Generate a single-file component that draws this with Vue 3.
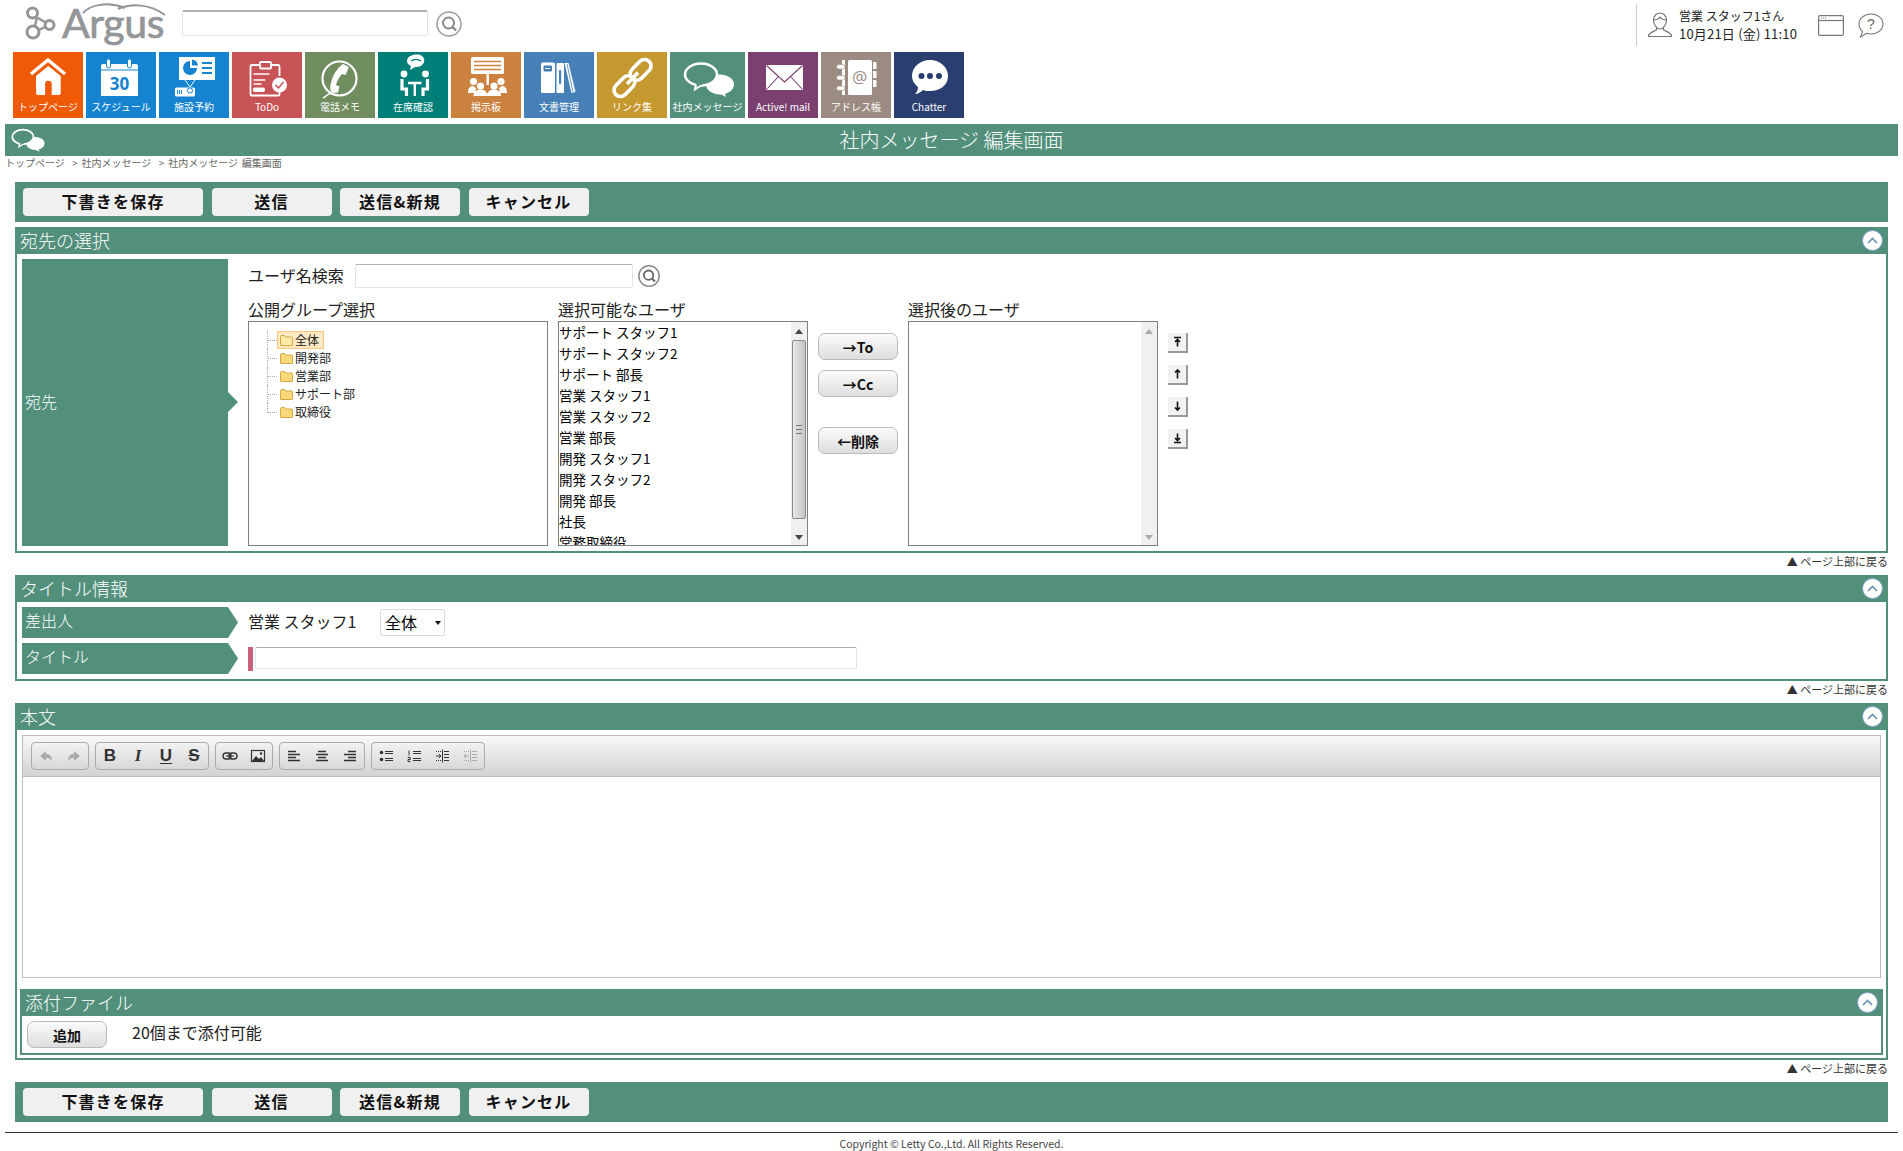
<script setup>
import { ref } from "vue";

const green = "#53907c";

// グローバルナビ
const tiles = [
  { label: "トップページ", color: "#ee5a06", icon: "home" },
  { label: "スケジュール", color: "#1583cf", icon: "calendar" },
  { label: "施設予約", color: "#1583cf", icon: "facility" },
  { label: "ToDo", color: "#c85356", icon: "todo" },
  { label: "電話メモ", color: "#708d60", icon: "phone" },
  { label: "在席確認", color: "#007f79", icon: "seat" },
  { label: "掲示板", color: "#cc823f", icon: "board" },
  { label: "文書管理", color: "#4680b6", icon: "docs" },
  { label: "リンク集", color: "#c69830", icon: "link" },
  { label: "社内メッセージ", color: green, icon: "message", wide: true },
  { label: "Active! mail", color: "#7b3f70", icon: "mail" },
  { label: "アドレス帳", color: "#9c8b82", icon: "address" },
  { label: "Chatter", color: "#2a3e70", icon: "chatter" },
];

const bubbles = (c) => `
  <ellipse cx="50" cy="32.500" rx="14" ry="10" fill="#fff"/>
  <path d="M47 40l9 5-2-6z" fill="#fff"/>
  <ellipse cx="31" cy="22.500" rx="16" ry="11" fill="${c}" stroke="#fff" stroke-width="2.600"/>
  <path d="M26 32.500l-1 5 7-4.500" fill="${c}" stroke="#fff" stroke-width="2"/>
  <path d="M26.500 31h6v2h-6z" fill="${c}"/>`;

const icons = {
  home: `<path d="M18 22 35 8l17 14" fill="none" stroke="#fff" stroke-width="3.400"/>
    <path d="M23 24 35.300 14 47.700 24v17a2 2 0 0 1-2 2h-7V32a3.300 3.300 0 0 0-6.600 0v11h-7a2 2 0 0 1-2-2z" fill="#fff"/>`,
  calendar: `<path d="M15 14a2 2 0 0 1 2-2h33a2 2 0 0 1 2 2v30H15z" fill="#fff"/>
    <rect x="15" y="17.500" width="37" height="1" fill="#1583cf"/>
    <rect x="20.500" y="7" width="4" height="9" rx="2" fill="#fff" stroke="#1583cf"/>
    <rect x="41.500" y="7" width="4" height="9" rx="2" fill="#fff" stroke="#1583cf"/>
    <text x="33.500" y="38" text-anchor="middle" font-family="'Open Sans',sans-serif" font-weight="700" font-size="17" fill="#1583cf">30</text>`,
  facility: `<rect x="20" y="5" width="36" height="23" fill="#fff"/>
    <path d="M31 9a7 7 0 1 0 7 7h-7z" fill="#1583cf"/><path d="M33 7.500a7 7 0 0 1 6 6h-6z" fill="#1583cf"/>
    <path d="M43 11h10M43 16h10M43 21h10" stroke="#1583cf" stroke-width="1.800"/>
    <path d="M26 28l5 7 5-7" fill="none" stroke="#fff"/>
    <rect x="16" y="35.500" width="20" height="9" rx="1.500" fill="#fff"/>
    <circle cx="31" cy="38.500" r="2.600" fill="#fff" stroke="#1583cf"/>
    <path d="M18.500 38v4M20.500 38v4M22.500 38v4" stroke="#1583cf"/>`,
  todo: `<path d="M27 13h-7a1.500 1.500 0 0 0-1.500 1.500v28a1 1 0 0 0 1 1h27a1 1 0 0 0 1-1v-5M47.500 24v-9.500a1.500 1.500 0 0 0-1.500-1.500h-7" fill="none" stroke="#fff" stroke-width="1.800"/>
    <rect x="28" y="10" width="11" height="6.500" rx="1" fill="#c85356" stroke="#fff" stroke-width="1.800"/>
    <path d="M21.500 22h16M21.500 28h12M21.500 32h8" stroke="#fff" stroke-width="1.600"/>
    <rect x="21" y="35.500" width="12" height="4.500" rx="2" fill="#fff"/>
    <circle cx="47.500" cy="33" r="7.500" fill="#fff"/>
    <path d="M43.500 33l3 3 5-6" fill="none" stroke="#c85356" stroke-width="1.500"/>`,
  phone: `<circle cx="34.500" cy="26.500" r="17" fill="none" stroke="#fff" stroke-width="2.200"/>
    <path d="M38 12l5 2.500a1 1 0 0 1 .500 1.500l-3 7-3.500-1c-3 3-5 7-6 11l3.500 1.500-1.500 6-4.500.500c-4-1-4-6-2-12 2-7 6-13 11.500-17z" fill="#fff"/>
    <path d="M26 41c-3 1-6 4-8 5" fill="none" stroke="#fff" stroke-width="1.500"/>`,
  seat: `<path d="M30 6c2-3 10-5 14-2 3 2 3 7 0 9-2 2-5 2-7 2l-5 3 1-4c-4-2-5-5-3-8z" fill="#fff"/>
    <path d="M33 9c3-2 7-2 10 0" fill="none" stroke="#007f79" stroke-width="1.200"/>
    <circle cx="26" cy="22" r="3.400" fill="#fff"/><circle cx="47.500" cy="22" r="3.400" fill="#fff"/>
    <path d="M24 27v10h4.500v7M49.500 27v10H45v7" fill="none" stroke="#fff" stroke-width="3.200"/>
    <path d="M30 31h13.500M36.800 31v13" fill="none" stroke="#fff" stroke-width="2.400"/>`,
  board: `<rect x="20" y="5" width="33" height="17" rx="1.500" fill="#fff"/>
    <path d="M23 9.500h27M23 13.500h27M23 17.500h27" stroke="#cc823f" stroke-width="1.400"/>
    <path d="M35.500 22h2.400v11h-2.400z" fill="#fff"/>
    <g fill="#fff"><circle cx="22.500" cy="29.500" r="3.600"/><circle cx="50" cy="29.500" r="3.600"/><circle cx="29.500" cy="34" r="3.600"/><circle cx="43" cy="34" r="3.600"/>
    <path d="M17 41c0-5 2-7 5-7l3 2-1 5zM56 41c0-5-2-7-5-7l-3 2 1 5zM22.500 44c0-4 3-6.500 7-6.500s7 2.500 7 6.500zM36 44c0-4 3-6.500 7-6.500s7 2.500 7 6.500z"/></g>`,
  docs: `<rect x="17" y="10.500" width="14" height="30.500" rx="1.500" fill="#fff"/>
    <rect x="19.500" y="13.500" width="8.500" height="6" rx="1" fill="#4680b6"/><path d="M21 16.500h5" stroke="#fff"/>
    <rect x="32.500" y="11" width="7.500" height="30" rx="1" fill="#fff"/><rect x="35" y="18" width="2.200" height="14" rx="1" fill="#4680b6"/>
    <path d="M40.500 11l4 0 7 29-4 1z" fill="#fff"/><path d="M43 12l6 28" stroke="#4680b6" stroke-width=".8"/>`,
  link: `<g fill="none" stroke="#fff" stroke-width="3.600" transform="rotate(-45 35.500 26)">
    <rect x="12" y="19.500" width="24" height="13" rx="6.500"/><rect x="35" y="19.500" width="24" height="13" rx="6.500"/></g>
    <path d="M30 32 41 20.500" stroke="#fff" stroke-width="3.600"/>`,
  message: bubbles(green),
  mail: `<rect x="18" y="13" width="37" height="25" fill="#fff"/>
    <path d="M18.500 13.500 36.500 30l18-16.500M18.500 37.500 30 25M54.500 37.500 43 25" fill="none" stroke="#7b3f70" stroke-width="1.100"/>`,
  address: `<rect x="21" y="8" width="3" height="35" fill="#fff"/><rect x="27" y="8" width="24" height="35" rx="1.500" fill="#fff"/>
    <g fill="#fff" stroke="#9c8b82" stroke-width=".6"><rect x="15.500" y="12.500" width="8.500" height="4.500" rx="2.200"/><rect x="15.500" y="23.500" width="8.500" height="4.500" rx="2.200"/><rect x="15.500" y="34" width="8.500" height="4.500" rx="2.200"/></g>
    <path d="M52 10h2.500a1 1 0 0 1 1 1v6H52zM52 19h2.500a1 1 0 0 1 1 1v6H52zM52 28h2.500a1 1 0 0 1 1 1v6H52z" fill="#fff"/>
    <text x="38.500" y="31" text-anchor="middle" font-family="'Open Sans',sans-serif" font-size="17" fill="#9c8b82">@</text>`,
  chatter: `<path d="M36 8c10 0 18 7 18 16s-8 15-18 15c-3 0-5 0-7-1-2 2-5 4-8 4 2-2 3-4 3-7-4-3-6-7-6-11 0-9 8-16 18-16z" fill="#fff"/>
    <circle cx="27.500" cy="24" r="3" fill="#2a3e70"/><circle cx="36" cy="24" r="3" fill="#2a3e70"/><circle cx="45" cy="24" r="3" fill="#2a3e70"/>`,
};

// ツリー
const groups = ["全体", "開発部", "営業部", "サポート部", "取締役"];

const users = [
  "サポート スタッフ1",
  "サポート スタッフ2",
  "サポート 部長",
  "営業 スタッフ1",
  "営業 スタッフ2",
  "営業 部長",
  "開発 スタッフ1",
  "開発 スタッフ2",
  "開発 部長",
  "社長",
  "常務取締役",
];

const actions = [
  { label: "下書きを保存", wide: true },
  { label: "送信" },
  { label: "送信&新規" },
  { label: "キャンセル" },
];

const sortIcons = [
  "M2 1.500h7M5.500 3.500v7M3 6l2.500-2.500L8 6",
  "M5.500 2v8.500M3 4.500 5.500 2 8 4.500",
  "M5.500 1.500V10M3 7.500 5.500 10 8 7.500",
  "M5.500 1.500v7M3 6l2.500 2.500L8 6M2 10.500h7",
];

// エディタのツールバー
const toolbar = [
  [{ icon: "undo", dim: true }, { icon: "redo", dim: true }],
  [{ text: "B", cls: "b" }, { text: "I", cls: "i" }, { text: "U", cls: "u" }, { text: "S", cls: "s" }],
  [{ icon: "chain" }, { icon: "image" }],
  [{ icon: "left" }, { icon: "center" }, { icon: "right" }],
  [{ icon: "ul" }, { icon: "ol" }, { icon: "indent" }, { icon: "outdent", dim: true }],
];

const tbIcons = {
  undo: `<path d="M8 3 2 8l6 5v-3c2 0 4 0 6 3 0-4-2-7-6-7z" fill="currentColor"/>`,
  redo: `<path d="M8 3l6 5-6 5v-3c-2 0-4 0-6 3 0-4 2-7 6-7z" fill="currentColor"/>`,
  chain: `<g fill="none" stroke="currentColor" stroke-width="1.400"><rect x="1" y="5" width="8" height="6" rx="3"/><rect x="7" y="5" width="8" height="6" rx="3"/></g><path d="M4 8h8" stroke="currentColor" stroke-width="1.200"/>`,
  image: `<rect x="1.500" y="2.500" width="13" height="11" fill="none" stroke="currentColor" stroke-width="1.200"/><path d="M2 13l4-5 3 3 2-2 3 4z" fill="currentColor"/><circle cx="11" cy="5.500" r="1.200" fill="currentColor"/>`,
  left: `<path d="M2 3.500h8M2 6.500h12M2 9.500h8M2 12.500h12" stroke="currentColor" stroke-width="1.500"/>`,
  center: `<path d="M4 3.500h8M2 6.500h12M4 9.500h8M2 12.500h12" stroke="currentColor" stroke-width="1.500"/>`,
  right: `<path d="M6 3.500h8M2 6.500h12M6 9.500h8M2 12.500h12" stroke="currentColor" stroke-width="1.500"/>`,
  ul: `<circle cx="3.500" cy="4.500" r="1.800" fill="currentColor"/><circle cx="3.500" cy="11.500" r="1.800" fill="currentColor"/><path d="M7 3.500h8M7 5.500h8M7 10.500h8M7 12.500h8" stroke="currentColor"/>`,
  ol: `<path d="M3 2.500v5M1.800 9.500h2.400v2H2v2h2.400M7 3.500h8M7 5.500h8M7 10.500h8M7 12.500h8" fill="none" stroke="currentColor"/>`,
  indent: `<path d="M8.500 1.500v13M10 3.500h5M10 6.500h5M10 9.500h5M10 12.500h5M2 8h5M5 6l2 2-2 2" fill="none" stroke="currentColor"/><path d="M2 3.500h5M2 12.500h5" stroke="currentColor" stroke-dasharray="1 1"/>`,
  outdent: `<path d="M8.500 1.500v13M10 3.500h5M10 6.500h5M10 9.500h5M10 12.500h5M2 8h5M4 6 2 8l2 2" fill="none" stroke="currentColor"/><path d="M2 3.500h5M2 12.500h5" stroke="currentColor" stroke-dasharray="1 1"/>`,
};

const titleText = ref("");
</script>

<template>
  <div class="page">
    <!-- ヘッダー -->
    <header class="top">
      <svg class="logo" width="150" height="60" viewBox="0 -8 150 60">
        <g fill="none" stroke="#939598" stroke-width="3">
          <circle cx="12.500" cy="13" r="5" />
          <circle cx="29.500" cy="25" r="4.500" />
          <circle cx="13" cy="32" r="6" />
          <path d="M16 17l9 5M15 26l2-9M19 30l6-3" stroke-width="2.400" />
          <path d="M63 13c7-8 24-12 42-5M98 9c14-6 32-5 47 6" stroke-width="2" />
        </g>
        <text x="42" y="38" font-family="Lato, sans-serif" font-size="41" letter-spacing="-.4" stroke="#939598" stroke-width=".7" fill="#939598">Argus</text>
      </svg>
      <input class="search" />
      <svg class="lens" width="26" height="26" viewBox="0 0 26 26">
        <circle cx="13" cy="13" r="12" fill="none" stroke="#9a9a9a" stroke-width="1.500" />
        <circle cx="12.500" cy="12" r="5.500" fill="none" stroke="#8a8a8a" stroke-width="2" />
        <path d="M16.500 16 20 19.500" stroke="#8a8a8a" stroke-width="2.400" />
      </svg>
      <div class="user">
        <svg width="24" height="26" viewBox="0 0 24 26" fill="none" stroke="#777" stroke-width="1.200">
          <path d="M5.500 8c0-4 3-7 6.500-7s6.500 3 6.500 7-3 9-6.500 9-6.500-5-6.500-9zM5.500 8c3 0 5-1 6.500-3 1.500 2 3.500 3 6.500 3" />
          <path d="M8.500 15.500v2.500c-3 1.500-8 2.500-8 6.500h23c0-4-5-5-8-6.500v-2.500" />
        </svg>
        <div class="who">
          <div>営業 スタッフ1さん</div>
          <div class="when">10月21日 (金) 11:10</div>
        </div>
        <svg class="win" width="26" height="21" viewBox="0 0 26 21" fill="none" stroke="#777" stroke-width="1.200">
          <rect x=".6" y=".6" width="24.800" height="19.800" rx="1.500" />
          <path d="M1 5.500h24" />
          <path d="M3 3h1M5 3h1M7 3h1" />
        </svg>
        <svg class="help" width="26" height="25" viewBox="0 0 26 25">
          <path d="M13 1c6.600 0 12 4.500 12 10s-5.400 10-12 10c-1.500 0-3-.2-4.300-.7L2.500 24l2-5.500C2.300 16.600 1 14 1 11 1 5.500 6.400 1 13 1z" fill="none" stroke="#777" stroke-width="1.100" />
          <text x="13" y="16" text-anchor="middle" font-family="'Liberation Sans',sans-serif" font-size="14" fill="#666">?</text>
        </svg>
      </div>
    </header>

    <!-- メニュー -->
    <nav class="tiles">
      <div v-for="t in tiles" :key="t.label" class="tile" :class="{ wide: t.wide }" :style="{ background: t.color }">
        <svg class="tile-icon" :width="t.wide ? 75 : 70" height="47" :viewBox="t.wide ? '0 0 75 47' : '0 0 70 47'" v-html="icons[t.icon]"></svg>
        <span>{{ t.label }}</span>
      </div>
    </nav>

    <div class="page-title">
      <svg width="35" height="25" viewBox="13 9 53 38" v-html="icons.message"></svg>
      <h1>社内メッセージ 編集画面</h1>
    </div>
    <div class="crumb">トップページ&nbsp;&nbsp;&gt;&nbsp;社内メッセージ&nbsp;&nbsp;&gt;&nbsp;社内メッセージ 編集画面</div>

    <div class="actions">
      <button v-for="a in actions" :key="a.label" :class="{ wide: a.wide }">{{ a.label }}</button>
    </div>

    <!-- 宛先の選択 -->
    <section class="sec">
      <div class="sec-head">
        <span>宛先の選択</span>
        <span class="fold"><svg width="11" height="7" viewBox="0 0 11 7"><path d="M1 6l4.500-4.500L10 6" fill="none" stroke="#6b8fb5" stroke-width="1.600" /></svg></span>
      </div>
      <div class="sec-body dest">
        <div class="th tall">宛先</div>
        <div class="dest-main">
          <div class="user-search">
            <label>ユーザ名検索</label>
            <input class="search-user" />
            <svg width="22" height="22" viewBox="0 0 26 26">
              <circle cx="13" cy="13" r="12" fill="none" stroke="#8a8a8a" stroke-width="1.800" />
              <circle cx="12.500" cy="12" r="5.500" fill="none" stroke="#666" stroke-width="2.200" />
              <path d="M16.500 16 20 19.500" stroke="#666" stroke-width="2.600" />
            </svg>
          </div>
          <div class="pickers">
            <div class="col">
              <div class="col-label">公開グループ選択</div>
              <div class="box tree">
                <div v-for="(g, i) in groups" :key="g" class="tree-row">
                  <span class="hook" :class="{ last: i === groups.length - 1 }"><i></i></span>
                  <span class="node" :class="{ on: i === 0 }">
                    <svg width="13" height="12" viewBox="0 0 13 12">
                      <path d="M.5 2.500a1 1 0 0 1 1-1h3l1 1.500h6a1 1 0 0 1 1 1v7a.5.5 0 0 1-.5.500H1a.5.5 0 0 1-.5-.5z" :fill="i === 0 ? '#fbeaa8' : '#f8d878'" stroke="#d2a945" />
                    </svg>
                    {{ g }}
                  </span>
                </div>
              </div>
            </div>
            <div class="col">
              <div class="col-label">選択可能なユーザ</div>
              <div class="box list">
                <div class="items">
                  <div v-for="u in users" :key="u" class="item">{{ u }}</div>
                </div>
                <div class="bar">
                  <span class="tri up"></span>
                  <span class="thumb"><i></i></span>
                  <span class="tri down"></span>
                </div>
              </div>
            </div>
            <div class="move">
              <button class="btn">→To</button>
              <button class="btn">→Cc</button>
              <button class="btn del">←削除</button>
            </div>
            <div class="col">
              <div class="col-label">選択後のユーザ</div>
              <div class="box list">
                <div class="items"></div>
                <div class="bar off">
                  <span class="tri up"></span>
                  <span class="gap"></span>
                  <span class="tri down"></span>
                </div>
              </div>
            </div>
            <div class="sort">
              <button v-for="d in sortIcons" :key="d" class="sort-btn">
                <svg width="11" height="12" viewBox="0 0 11 12"><path :d="d" fill="none" stroke="#111" stroke-width="1.600" /></svg>
              </button>
            </div>
          </div>
        </div>
      </div>
    </section>
    <div class="to-top">▲ ページ上部に戻る</div>

    <!-- タイトル情報 -->
    <section class="sec">
      <div class="sec-head">
        <span>タイトル情報</span>
        <span class="fold"><svg width="11" height="7" viewBox="0 0 11 7"><path d="M1 6l4.500-4.500L10 6" fill="none" stroke="#6b8fb5" stroke-width="1.600" /></svg></span>
      </div>
      <div class="sec-body info">
        <div class="info-row">
          <div class="th">差出人</div>
          <span class="sender">営業 スタッフ1</span>
          <div class="pick">全体<i></i></div>
        </div>
        <div class="info-row">
          <div class="th">タイトル</div>
          <span class="required"></span>
          <input v-model="titleText" class="title-input" />
        </div>
      </div>
    </section>
    <div class="to-top">▲ ページ上部に戻る</div>

    <!-- 本文 -->
    <section class="sec">
      <div class="sec-head">
        <span>本文</span>
        <span class="fold"><svg width="11" height="7" viewBox="0 0 11 7"><path d="M1 6l4.500-4.500L10 6" fill="none" stroke="#6b8fb5" stroke-width="1.600" /></svg></span>
      </div>
      <div class="sec-body main-body">
        <div class="editor">
          <div class="toolbar">
            <div v-for="(g, i) in toolbar" :key="i" class="tb-group">
              <span v-for="(b, j) in g" :key="j" class="tb-btn" :class="{ dim: b.dim }">
                <span v-if="b.text" class="glyph" :class="b.cls">{{ b.text }}</span>
                <svg v-else width="16" height="16" viewBox="0 0 16 16" v-html="tbIcons[b.icon]"></svg>
              </span>
            </div>
          </div>
          <div class="edit-area"></div>
        </div>
        <div class="attach">
          <div class="sec-head">
            <span>添付ファイル</span>
            <span class="fold"><svg width="11" height="7" viewBox="0 0 11 7"><path d="M1 6l4.500-4.500L10 6" fill="none" stroke="#6b8fb5" stroke-width="1.600" /></svg></span>
          </div>
          <div class="attach-body">
            <button class="btn">追加</button>
            <span>20個まで添付可能</span>
          </div>
        </div>
      </div>
    </section>
    <div class="to-top">▲ ページ上部に戻る</div>

    <div class="actions last">
      <button v-for="a in actions" :key="a.label" :class="{ wide: a.wide }">{{ a.label }}</button>
    </div>

    <footer class="foot">Copyright © Letty Co.,Ltd. All Rights Reserved.</footer>
  </div>
</template>

<style>
html,
body {
  margin: 0;
  background: #fff;
  overflow: hidden;
}
</style>

<style scoped>
.page {
  height: 1151px;
  padding: 0 5px;
  box-sizing: border-box;
  font-family: "Noto Sans CJK JP", "Noto Sans", sans-serif;
  color: #222;
}
.top {
  height: 52px;
  display: flex;
  align-items: flex-start;
}
.logo {
  margin: -8px 0 0 15px;
  flex: none;
}
.search {
  width: 246px;
  height: 26px;
  margin: 10px 0 0 12px;
  box-sizing: border-box;
  border: 1px solid #e2e2e8;
  border-top: 2px solid #b0b0b0;
  border-radius: 2px;
}
.lens {
  margin: 11px 0 0 8px;
}
.user {
  margin-left: auto;
  height: 42px;
  margin-top: 4px;
  border-left: 1px solid #ccc;
  display: flex;
  align-items: center;
  padding: 0 14px 0 11px;
  font-size: 12px;
  line-height: 18px;
}
.who {
  margin-left: 7px;
  width: 139px;
}
.when {
  font-size: 13px;
  letter-spacing: 0.2px;
}
.help {
  margin-left: 14px;
}
.tiles {
  display: flex;
  gap: 3px;
  margin-left: 8px;
}
.tile {
  width: 70px;
  height: 66px;
  display: flex;
  flex-direction: column;
  align-items: center;
  color: #fff;
  font-size: 10px;
  line-height: 14px;
}
.tile.wide {
  width: 75px;
}
.tile-icon {
  flex: none;
}
.tile span {
  margin-top: 1px;
  white-space: nowrap;
}
.page-title {
  margin-top: 6px;
  height: 32px;
  background: #53907c;
  display: grid;
  grid-template-columns: 1fr auto 1fr;
  align-items: center;
  padding-left: 6px;
}
.page-title h1 {
  margin: 0;
  font-size: 20px;
  font-weight: 300;
  color: #fff;
  line-height: 32px;
  transform: translateX(-3px);
}
.crumb {
  height: 26px;
  font-size: 10px;
  line-height: 14px;
  word-spacing: 1.500px;
  color: #666;
}
.actions {
  margin: 0 10px 5px;
  height: 40px;
  box-sizing: border-box;
  padding: 6px 8px;
  background: #53907c;
  display: flex;
  gap: 8.500px;
}
.actions.last {
  margin-bottom: 0;
}
.actions button {
  width: 120px;
  height: 28px;
  border: 0;
  border-radius: 4px;
  background: #f0f0f0;
  font-family: inherit;
  font-size: 16px;
  font-weight: 700;
  letter-spacing: 1.200px;
  line-height: 27px;
  padding: 0 0 1px;
  color: #111;
}
.actions button.wide {
  width: 180px;
}
.sec {
  margin: 0 10px;
}
.sec-head {
  height: 27px;
  background: #53907c;
  color: #fff;
  font-size: 18px;
  font-weight: 300;
  line-height: 27px;
  padding: 0 5.500px 0 5px;
  display: flex;
  justify-content: space-between;
  align-items: center;
}
.fold {
  width: 21px;
  height: 21px;
  box-sizing: border-box;
  border-radius: 50%;
  background: #fff;
  border: 1px solid #7f9fcb;
  display: flex;
  align-items: center;
  justify-content: center;
}
.sec-body {
  border: 2px solid #53907c;
  border-top: 0;
  padding: 5px;
}
.dest {
  display: flex;
  gap: 10px;
}
.th {
  flex: none;
  width: 216px;
  height: 31px;
  background: #53907c;
  color: #fff;
  font-size: 16px;
  font-weight: 300;
  line-height: 27px;
  padding-left: 3px;
  box-sizing: border-box;
  clip-path: polygon(0 0, 206px 0, 216px 50%, 206px 100%, 0 100%);
}
.th.tall {
  height: 287px;
  line-height: 284px;
  clip-path: polygon(0 0, 206px 0, 206px 133px, 216px 143px, 206px 153px, 206px 100%, 0 100%);
}
.dest-main {
  flex: 1;
  padding-top: 5px;
}
.user-search {
  display: flex;
  align-items: center;
  height: 24px;
  font-size: 16px;
}
.user-search label {
  width: 107px;
  line-height: 20px;
  padding-bottom: 3px;
}
.search-user {
  width: 278px;
  height: 24px;
  box-sizing: border-box;
  border: 1px solid #e2e2e8;
  border-top: 1px solid #b0b0b0;
  border-radius: 2px;
  margin-right: 5px;
}
.pickers {
  display: flex;
  gap: 10px;
}
.col-label {
  height: 33px;
  box-sizing: border-box;
  padding-top: 12px;
  font-size: 16px;
  line-height: 19px;
}
.box {
  height: 225px;
  box-sizing: border-box;
  border: 1px solid #808080;
}
.tree {
  width: 300px;
  padding: 9px 0 0 18px;
  font-size: 12px;
}
.tree-row {
  height: 18px;
  display: flex;
  align-items: center;
  line-height: 18px;
}
.hook {
  align-self: stretch;
  width: 10px;
  box-sizing: border-box;
  border-left: 1px dotted #aaa;
  flex: none;
}
.hook.last {
  align-self: flex-start;
  height: 10px;
}
.hook i {
  display: block;
  height: 9px;
  border-bottom: 1px dotted #aaa;
}
.node {
  display: flex;
  align-items: center;
  gap: 2px;
  height: 18px;
  padding: 0 5px 0 3px;
}
.node.on {
  background: #fde9c4;
  box-shadow: inset 0 0 0 1px #fbc87e;
}
.list {
  width: 250px;
  display: flex;
}
.items {
  flex: 1;
  min-width: 0;
  overflow: hidden;
  font-size: 13.500px;
  line-height: 21px;
  color: #000;
}
.item {
  white-space: nowrap;
}
.bar {
  width: 16px;
  flex: none;
  background: #f0f0f0;
  display: flex;
  flex-direction: column;
  align-items: center;
}
.tri {
  height: 18px;
  flex: none;
  display: flex;
  align-items: center;
}
.tri::before {
  content: "";
  border-left: 4px solid transparent;
  border-right: 4px solid transparent;
}
.tri.up::before {
  border-bottom: 5px solid #444;
}
.tri.down::before {
  border-top: 5px solid #444;
}
.off .tri.up::before {
  border-bottom-color: #aaa;
}
.off .tri.down::before {
  border-top-color: #aaa;
}
.tri.down {
  height: 16px;
}
.thumb {
  flex: 1;
  width: 14px;
  margin-bottom: 10px;
  box-sizing: border-box;
  border: 1px solid #8a8a8a;
  border-radius: 2px;
  background: linear-gradient(90deg, #e8e8e8, #c4c4c4);
  display: flex;
  align-items: center;
  justify-content: center;
}
.thumb i {
  width: 6px;
  height: 7px;
  border-top: 1px solid #777;
  border-bottom: 1px solid #777;
  background: linear-gradient(#777, #777) center / 100% 1px no-repeat;
}
.gap {
  flex: 1;
  margin-bottom: 10px;
}
.move {
  display: flex;
  flex-direction: column;
  padding-top: 45px;
  gap: 10px;
}
.btn {
  width: 80px;
  height: 27px;
  box-sizing: border-box;
  border: 1px solid #bbb;
  border-radius: 7px;
  background: linear-gradient(#fbfbfb, #dedede);
  font-family: inherit;
  font-size: 14px;
  font-weight: 700;
  line-height: 24px;
  color: #111;
  padding: 0;
}
.del {
  margin-top: 20px;
}
.sort {
  display: flex;
  flex-direction: column;
  padding-top: 45px;
  gap: 12px;
}
.sort-btn {
  width: 20px;
  height: 20px;
  padding: 0;
  box-sizing: border-box;
  border: 0;
  border-right: 2px solid #999;
  border-bottom: 2px solid #999;
  background: #f2f2f2;
  display: flex;
  align-items: center;
  justify-content: center;
}
.to-top {
  height: 22px;
  margin-right: 10px;
  text-align: right;
  font-size: 11px;
  line-height: 15px;
  padding-top: 1px;
  box-sizing: border-box;
  color: #333;
}
.info {
  padding-bottom: 5px;
  display: flex;
  flex-direction: column;
  gap: 5px;
}
.info-row {
  display: flex;
  align-items: center;
}
.sender {
  margin-left: 10px;
  font-size: 16px;
  width: 132px;
  padding-bottom: 3px;
}
.pick {
  width: 65px;
  height: 27px;
  box-sizing: border-box;
  border: 1px solid #dcdce0;
  border-radius: 2px;
  font-size: 16px;
  line-height: 22px;
  padding: 0 0 2px 4px;
  display: flex;
  align-items: center;
  color: #000;
}
.pick i {
  margin: 3px 0 0 18px;
  border-left: 3.500px solid transparent;
  border-right: 3.500px solid transparent;
  border-top: 4px solid #111;
}
.required {
  width: 5px;
  height: 24px;
  background: #c9607a;
  margin-left: 10px;
}
.title-input {
  width: 602px;
  height: 22px;
  box-sizing: border-box;
  margin: -2px 0 0 2px;
  border: 1px solid #e2e2e8;
  border-top: 1px solid #aaa;
  border-radius: 2px;
}
.main-body {
  padding-bottom: 3px;
}
.editor {
  height: 243px;
  box-sizing: border-box;
  border: 1px solid #bbb;
  display: flex;
  flex-direction: column;
}
.toolbar {
  height: 41px;
  flex: none;
  box-sizing: border-box;
  padding: 6px 8px;
  background: linear-gradient(#f8f8f8, #d2d2d2);
  border-bottom: 1px solid #bbb;
  display: flex;
  gap: 6px;
}
.tb-group {
  display: flex;
  height: 28px;
  box-sizing: border-box;
  border: 1px solid #aaa;
  border-radius: 4px;
}
.tb-btn {
  width: 28px;
  display: flex;
  align-items: center;
  justify-content: center;
  color: #333;
}
.tb-btn.dim {
  color: #aaa;
}
.glyph {
  font-family: "Liberation Sans", sans-serif;
  font-size: 17px;
  font-weight: 700;
  line-height: 18px;
}
.glyph.i {
  font-family: "Liberation Serif", serif;
  font-style: italic;
}
.glyph.u {
  text-decoration: underline;
  text-underline-offset: 2px;
}
.glyph.s {
  text-decoration: line-through;
}
.attach {
  margin: 11px -2px 0;
}
.attach-body {
  height: 39px;
  box-sizing: border-box;
  border: 2px solid #53907c;
  border-top: 0;
  padding: 5px;
  display: flex;
  align-items: flex-start;
  font-size: 16px;
  line-height: 23px;
}
.attach-body span {
  margin-left: 25px;
}
.foot {
  margin-top: 10px;
  border-top: 1px solid #333;
  height: 18px;
  text-align: center;
  font-size: 10.500px;
  line-height: 21px;
  color: #444;
}
</style>
